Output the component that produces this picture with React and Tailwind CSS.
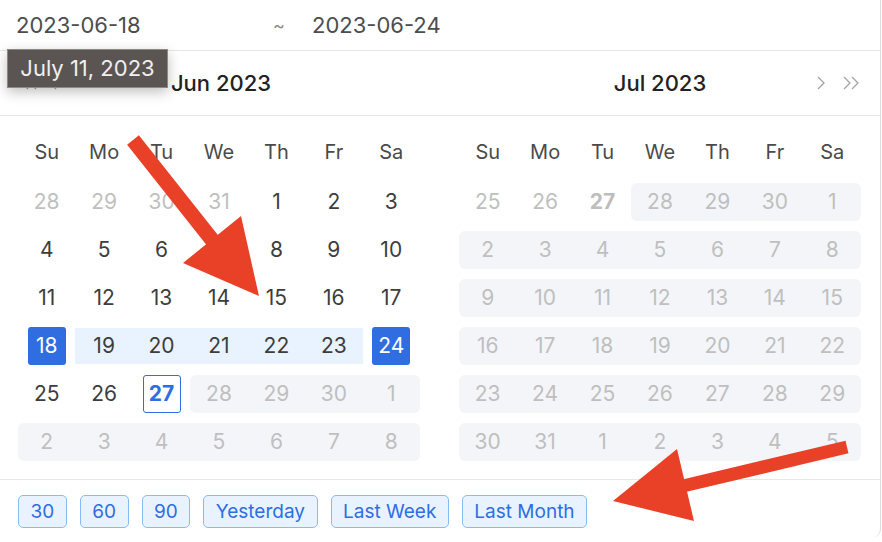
import React from 'react'

const FONT = { fontFamily: 'Inter, "Liberation Sans", sans-serif' }
const WEEK = ['Su', 'Mo', 'Tu', 'We', 'Th', 'Fr', 'Sa']

// cell flags: o = out of month, x = disabled, r = in range, s = selected, t = today, g = grey today
const range = (a, b, flags = {}) => Array.from({ length: b - a + 1 }, (_, i) => ({ d: a + i, ...flags }))

const june = [
  [...range(28, 31, { o: 1 }), ...range(1, 3)],
  range(4, 10),
  range(11, 17),
  [{ d: 18, s: 1 }, ...range(19, 23, { r: 1 }), { d: 24, s: 1 }],
  [{ d: 25 }, { d: 26 }, { d: 27, t: 1 }, ...range(28, 30, { x: 1, o: 1 }), { d: 1, x: 1, o: 1 }],
  range(2, 8, { x: 1, o: 1 }),
]

const july = [
  [{ d: 25, o: 1 }, { d: 26, o: 1 }, { d: 27, o: 1, g: 1 }, ...range(28, 30, { x: 1, o: 1 }), { d: 1, x: 1, o: 1 }],
  range(2, 8, { x: 1, o: 1 }),
  range(9, 15, { x: 1, o: 1 }),
  range(16, 22, { x: 1, o: 1 }),
  range(23, 29, { x: 1, o: 1 }),
  [...range(30, 31, { x: 1, o: 1 }), ...range(1, 5, { x: 1, o: 1 })],
]

function Chevron({ double, left }) {
  const pts = left ? '7,1 1,7 7,13' : '1,1 7,7 1,13'
  return (
    <svg width={double ? 18 : 9} height="14" viewBox={double ? '0 0 18 14' : '0 0 9 14'} fill="none" stroke="#a3a3a3" strokeWidth="1.3">
      <polyline points={pts} />
      {double && <polyline points={pts} transform="translate(8 0)" />}
    </svg>
  )
}

function Day({ c, first, last }) {
  let bg = ''
  if (c.x) bg = `bg-[#f4f5f9] ${first ? 'rounded-l-[6px]' : ''} ${last ? 'rounded-r-[6px]' : ''}`

  let box = 'text-[#3d3d3d]'
  if (c.o) box = 'text-[#bfbfbf]'
  if (c.s) box = 'bg-[#2f6de1] text-white rounded-[3px]'
  if (c.t) box = 'border border-[#2f6de1] text-[#2f6de1] font-bold rounded-[3px]'
  if (c.g) box = 'text-[#bdbdbd] font-bold'

  return (
    <div className="h-[48px] py-[5px]">
      <div className={`h-[38px] flex items-center justify-center ${bg}`}>
        {c.r ? (
          <div className="w-full h-[36px] bg-[#e8f3ff] flex items-center justify-center text-[#3d3d3d]">{c.d}</div>
        ) : (
          <div className={`w-[38px] h-[38px] flex items-center justify-center ${box}`}>{c.d}</div>
        )}
      </div>
    </div>
  )
}

function Month({ rows, className }) {
  return (
    <div className={`w-[440px] pt-[14px] pb-[13px] ${className}`}>
      <div className="grid grid-cols-7 h-[48px] pb-[4px] items-center text-center text-[20px] text-[#4a4a4a]">
        {WEEK.map((w) => (
          <div key={w}>{w}</div>
        ))}
      </div>
      {rows.map((row, ri) => (
        <div key={ri} className="grid grid-cols-7 text-[21px]">
          {row.map((c, ci) => (
            <Day
              key={ci}
              c={c}
              first={c.x && !(row[ci - 1] && row[ci - 1].x)}
              last={c.x && !(row[ci + 1] && row[ci + 1].x)}
            />
          ))}
        </div>
      ))}
    </div>
  )
}

const presets = ['30', '60', '90', 'Yesterday', 'Last Week', 'Last Month']

export default function App() {
  return (
    <div style={FONT} className="relative w-[882px] h-[542px] overflow-hidden bg-white">
      <div className="w-[881px] h-[537px] bg-white border-r border-[#dcdcdc] rounded-br-[8px] flex flex-col">
        {/* inputs */}
        <div className="h-[51px] flex items-center border-b border-[#e6e6e6] text-[22px] text-[#4d4d4d]">
          <span className="ml-[16px] w-[257px]">2023-06-18</span>
          <span className="text-[#8a8a8a] text-[18px] w-[39px]">~</span>
          <span>2023-06-24</span>
        </div>

        {/* headers */}
        <div className="h-[65px] flex border-b border-[#e6e6e6] text-[22px] font-medium text-[#222]">
          <div className="w-[440px] pl-[21px] pr-[19px] flex items-center">
            <div className="w-[44px] flex items-center gap-[10px]">
              <Chevron double left />
              <Chevron left />
            </div>
            <div className="flex-1 text-center">Jun 2023</div>
            <div className="w-[44px]" />
          </div>
          <div className="w-[440px] pl-[19px] pr-[19px] flex items-center">
            <div className="w-[44px]" />
            <div className="flex-1 text-center">Jul 2023</div>
            <div className="w-[44px] flex items-center justify-end gap-[17px]">
              <Chevron />
              <Chevron double />
            </div>
          </div>
        </div>

        {/* calendars */}
        <div className="flex border-b border-[#e6e6e6]">
          <Month rows={june} className="pl-[18px] pr-[20px]" />
          <Month rows={july} className="pl-[19px] pr-[19px]" />
        </div>

        {/* presets */}
        <div className="flex gap-[13px] pl-[18px] pt-[15px]">
          {presets.map((p) => (
            <button
              key={p}
              className="h-[33px] px-[11.5px] rounded-[5px] border border-[#84bdf5] bg-[#e8f3ff] text-[#2f6de1] text-[19px] leading-none"
            >
              {p}
            </button>
          ))}
        </div>
      </div>

      {/* strip of the page behind */}
      <div className="absolute left-0 right-0 bottom-0 h-[5px] bg-[linear-gradient(90deg,#9a6a5c_0%,#3a3535_5%,#c8c3bd_18%,#4b4a8c_35%,#8d9699_45%,#c9c4bb_60%,#55504c_75%,#b8b0a4_90%,#6c6c6c_100%)]" style={{ zIndex: -1 }} />

      {/* tooltip */}
      <div className="absolute left-[7px] top-[49px] w-[161px] h-[39px] bg-[#5a5552] border border-[#8d8883] shadow-[0_4px_12px_rgba(0,0,0,0.25)] flex items-center justify-center text-[22px] text-[#efefef]">
        July 11, 2023
      </div>

      {/* annotation arrows */}
      <svg className="absolute inset-0 pointer-events-none" width="882" height="542" viewBox="0 0 882 542">
        <line x1="133" y1="140" x2="213" y2="241" stroke="#e94128" strokeWidth="15" />
        <polygon points="183,263 241,216 259,296" fill="#e94128" />
        <line x1="847" y1="447" x2="683" y2="486" stroke="#e94128" strokeWidth="13" />
        <polygon points="613,501 677,449 694,521" fill="#e94128" />
      </svg>
    </div>
  )
}
